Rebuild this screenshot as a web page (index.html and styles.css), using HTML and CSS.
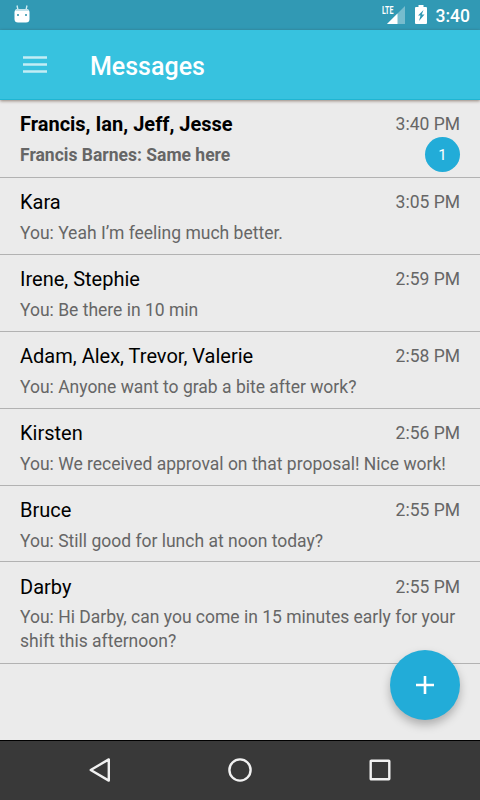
FILE: index.html
```
<!DOCTYPE html>
<html lang="en">
    <head>
        <meta charset="utf-8">
        <title>Messages</title>
        <link rel="stylesheet" href="styles.css">
    </head>
    <body>
        <div class="statusbar">
            <svg class="droid" width="16" height="18" viewBox="0 0 16 18">
                <path d="M3 0.5 L4 5 M13 0.5 L12 5" stroke="#d3eef4" stroke-width="1.3"/>
                <rect x="0.5" y="4" width="15" height="13.5" rx="3.5" fill="#fff"/>
                <path d="M2 4 H14 L15 6 H1 Z" fill="#c3e3eb"/>
                <rect x="3" y="9" width="2" height="2" fill="#5cabbf"/>
                <rect x="11" y="9" width="2" height="2" fill="#5cabbf"/>
            </svg>
            <div class="status-right">
                <div class="signal">
                    <span class="lte">LTE</span>
                    <svg width="18" height="18" viewBox="0 0 18 18">
                        <path d="M18 0 V18 H0 Z" fill="#77bccd"/>
                        <path d="M10.5 7.5 V18 H0 Z" fill="#fff"/>
                    </svg>
                </div>
                <svg class="battery" width="12" height="19" viewBox="0 0 12 19">
                    <path d="M3.5 0 H8.5 V2 H11 Q12 2 12 3 V18 Q12 19 11 19 H1 Q0 19 0 18 V3 Q0 2 1 2 H3.5 Z" fill="#fff"/>
                    <path d="M8.5 5 L3 10.5 H5.5 L4 16 L9.5 9.5 H6.8 Z" fill="#3199b4"/>
                </svg>
                <span class="clock">3:40</span>
            </div>
        </div>

        <div class="toolbar">
            <svg class="menu" width="24" height="18" viewBox="0 0 24 18">
                <path d="M0 1.5 H24 M0 8.5 H24 M0 15.5 H24" stroke="#c3edf5" stroke-width="2.6"/>
            </svg>
            <h1>Messages</h1>
        </div>

        <div class="list">
            <div class="row unread">
                <div class="line">
                    <span class="name">Francis, Ian, Jeff, Jesse</span>
                    <span class="time">3:40 PM</span>
                </div>
                <p>Francis Barnes: Same here</p>
                <span class="badge">1</span>
            </div>
            <div class="row">
                <div class="line">
                    <span class="name">Kara</span>
                    <span class="time">3:05 PM</span>
                </div>
                <p>You: Yeah I’m feeling much better.</p>
            </div>
            <div class="row">
                <div class="line">
                    <span class="name">Irene, Stephie</span>
                    <span class="time">2:59 PM</span>
                </div>
                <p>You: Be there in 10 min</p>
            </div>
            <div class="row">
                <div class="line">
                    <span class="name">Adam, Alex, Trevor, Valerie</span>
                    <span class="time">2:58 PM</span>
                </div>
                <p>You: Anyone want to grab a bite after work?</p>
            </div>
            <div class="row">
                <div class="line">
                    <span class="name">Kirsten</span>
                    <span class="time">2:56 PM</span>
                </div>
                <p>You: We received approval on that proposal! Nice work!</p>
            </div>
            <div class="row short">
                <div class="line">
                    <span class="name">Bruce</span>
                    <span class="time">2:55 PM</span>
                </div>
                <p>You: Still good for lunch at noon today?</p>
            </div>
            <div class="row last">
                <div class="line">
                    <span class="name">Darby</span>
                    <span class="time">2:55 PM</span>
                </div>
                <p>You: Hi Darby, can you come in 15 minutes early for your shift this afternoon?</p>
            </div>

            <div class="fab">
                <svg width="18" height="18" viewBox="0 0 18 18">
                    <path d="M9 0 V18 M0 9 H18" stroke="#fff" stroke-width="2.6"/>
                </svg>
            </div>
        </div>

        <div class="navbar">
            <svg width="24" height="26" viewBox="0 0 24 26">
                <path d="M20.8 2.4 V23.6 L2.7 13 Z"/>
            </svg>
            <svg width="26" height="26" viewBox="0 0 26 26">
                <circle cx="13" cy="13" r="10.6"/>
            </svg>
            <svg width="24" height="24" viewBox="0 0 24 24">
                <rect x="2.7" y="2.7" width="18.6" height="18.6" rx="0.5"/>
            </svg>
        </div>
    </body>
</html>
```
FILE: styles.css
```
* {
    box-sizing: border-box;
    font-family: Roboto, sans-serif;
}

body {
    margin: 0;
    width: 480px;
    height: 800px;
    display: flex;
    flex-direction: column;
    overflow: hidden;
    background-color: #ebebeb;
}

.statusbar {
    height: 30px;
    flex-shrink: 0;
    display: flex;
    align-items: flex-start;
    justify-content: space-between;
    padding: 5px 10px 0 14px;
    background-color: #3199b4;
    color: white;
}

.status-right {
    display: flex;
    align-items: flex-start;
}

.signal {
    position: relative;
    width: 23px;
    height: 19px;
}

.signal svg {
    display: block;
    margin: 1px 0 0 3px;
}

.lte {
    position: absolute;
    left: -2px;
    top: 1px;
    font-size: 11px;
    line-height: 9px;
    font-weight: 700;
    transform: scaleX(0.64);
    transform-origin: left;
}

.battery {
    margin-left: 8px;
}

.clock {
    margin-left: 9px;
    font-size: 17.5px;
    line-height: 22px;
    font-weight: 500;
}

.toolbar {
    position: relative;
    z-index: 1;
    height: 70px;
    flex-shrink: 0;
    display: flex;
    align-items: center;
    padding-left: 23px;
    background-color: #37c2df;
    border-bottom: 1px solid #20b5d2;
    box-shadow: 0 1px 3px rgba(60, 30, 10, 0.5);
}

.toolbar h1 {
    margin: 4px 0 0 43px;
    color: white;
    font-size: 25px;
    line-height: 30px;
    font-weight: 500;
}

.list {
    position: relative;
    flex: 1;
}

.row {
    position: relative;
    padding: 12px 20px 9px;
    border-bottom: 1px solid #b2b2b2;
}

.row.unread,
.row.last {
    padding-bottom: 10px;
}

.row.short {
    padding-bottom: 8px;
}

.line {
    display: flex;
    justify-content: space-between;
    line-height: 24px;
}

.last .line {
    margin: 1px 0 -1px;
}

.name {
    font-size: 20px;
    color: #000;
}

.time {
    font-size: 17.5px;
    color: #666;
}

.row p {
    margin: 7px -10px 0 0;
    font-size: 17.5px;
    line-height: 24px;
    color: #666;
}

.unread .name,
.unread p {
    font-weight: 700;
}

.badge {
    position: absolute;
    right: 20px;
    top: 37px;
    width: 35px;
    height: 35px;
    border-radius: 50%;
    background-color: #22acd8;
    color: white;
    font-size: 15px;
    line-height: 37px;
    text-align: center;
}

.fab {
    position: absolute;
    right: 20px;
    bottom: 20px;
    width: 70px;
    height: 70px;
    border-radius: 50%;
    display: flex;
    align-items: center;
    justify-content: center;
    background-color: #22acd8;
    box-shadow: 0 5px 10px rgba(0, 0, 0, 0.26);
}

.navbar {
    height: 60px;
    flex-shrink: 0;
    display: flex;
    align-items: center;
    justify-content: space-between;
    padding: 0 88px 1px;
    background-color: #393939;
    border-top: 1px solid #000;
}

.navbar svg {
    fill: none;
    stroke: #f1f1f1;
    stroke-width: 2.4;
    stroke-linejoin: round;
}
```
